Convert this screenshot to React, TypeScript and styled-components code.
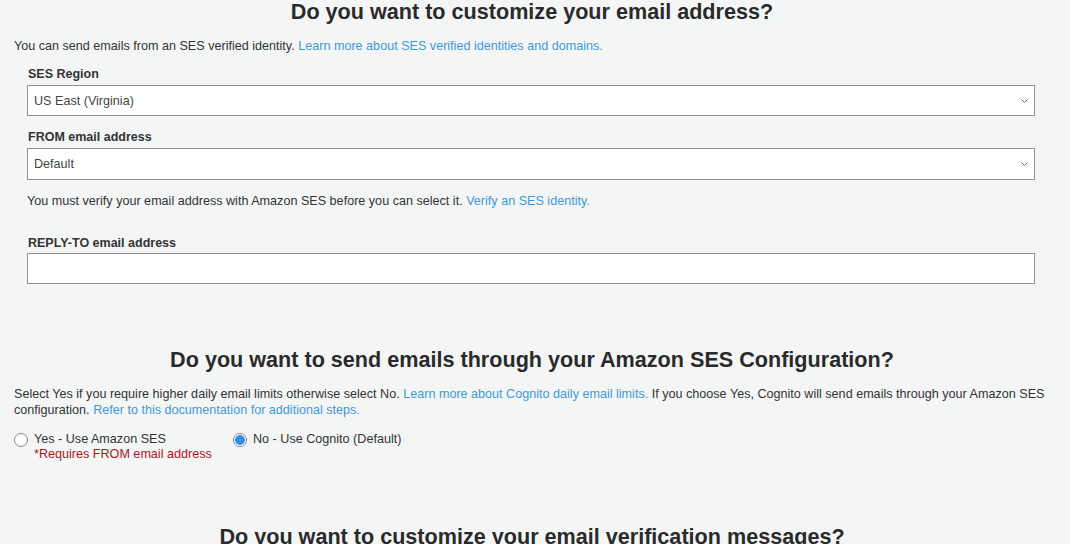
import React from "react";
import styled, { createGlobalStyle } from "styled-components";

const Global = createGlobalStyle`
  html, body { margin: 0; padding: 0; background: #f4f6f6; }
  body { font-family: "Liberation Sans", Arial, sans-serif; color: #333; }
  * { box-sizing: border-box; }
`;

const Page = styled.div`
  width: 1070px;
  height: 544px;
  overflow: hidden;
  padding: 0 20px 0 14px;
`;

const Heading = styled.h2<{ $top: number }>`
  margin: ${(p) => p.$top}px 0 0;
  font-size: 21.6px;
  line-height: 24px;
  font-weight: bold;
  color: #2a2a2a;
  text-align: center;
  white-space: nowrap;
`;

const Para = styled.p<{ $top: number }>`
  margin: ${(p) => p.$top}px 0 0;
  font-size: 12.6px;
  line-height: 16px;
  color: #333;
`;

const Link = styled.a`
  color: #3f98d8;
  text-decoration: none;
`;

const Fields = styled.div`
  padding: 0 15px 0 13px;
`;

const Label = styled.div<{ $top: number }>`
  margin-top: ${(p) => p.$top}px;
  font-size: 12.5px;
  line-height: 16px;
  font-weight: bold;
  color: #333;
  padding-left: 1px;
`;

const Box = styled.div<{ $h?: number; $gap?: number }>`
  margin-top: ${(p) => p.$gap ?? 3}px;
  height: ${(p) => p.$h ?? 31}px;
  border: 1px solid #8d9393;
  background: #fff;
  display: flex;
  align-items: center;
  justify-content: space-between;
  padding: 0 6px 0 6px;
  font-size: 12.6px;
  color: #444;
`;

const RadioRow = styled.div`
  margin-top: 14px;
  display: flex;
  gap: 20px;
`;

const RadioItem = styled.label<{ $w: number }>`
  display: flex;
  gap: 6px;
  width: ${(p) => p.$w}px;
  font-size: 12.6px;
  line-height: 15px;
  color: #333;
`;

const Circle = styled.span<{ $on?: boolean }>`
  flex: none;
  width: 14px;
  height: 14px;
  margin-top: 1px;
  border-radius: 50%;
  border: 1px solid #8a8a8a;
  background: #fff;
  display: flex;
  align-items: center;
  justify-content: center;
  &::after {
    content: "";
    display: ${(p) => (p.$on ? "block" : "none")};
    width: 10px;
    height: 10px;
    border-radius: 50%;
    background: #3a8ee6;
  }
`;

const Req = styled.div`
  color: #b0141c;
`;

const Chevron = () => (
  <svg width="7" height="4" viewBox="0 0 7 4">
    <path d="M0.5 0.5 L3.5 3.5 L6.5 0.5" fill="none" stroke="#6a6a6a" strokeWidth="1" />
  </svg>
);

const Help = styled(Para)``;

export default function App() {
  return (
    <Page>
      <Global />
      <Heading $top={0}>Do you want to customize your email address?</Heading>
      <Para $top={14}>
        You can send emails from an SES verified identity.{" "}
        <Link>Learn more about SES verified identities and domains.</Link>
      </Para>
      <Fields>
        <Label $top={12}>SES Region</Label>
        <Box>
          <span>US East (Virginia)</span>
          <Chevron />
        </Box>
        <Label $top={13}>FROM email address</Label>
        <Box $h={32}>
          <span>Default</span>
          <Chevron />
        </Box>
        <Help $top={13}>
          You must verify your email address with Amazon SES before you can select it.{" "}
          <Link>Verify an SES identity.</Link>
        </Help>
        <Label $top={26}>REPLY-TO email address</Label>
        <Box $h={31} $gap={2} />
      </Fields>
      <Heading $top={64}>Do you want to send emails through your Amazon SES Configuration?</Heading>
      <Para $top={14}>
        Select Yes if you require higher daily email limits otherwise select No.{" "}
        <Link>Learn more about Cognito daily email limits.</Link> If you choose Yes, Cognito will
        send emails through your Amazon SES configuration.{" "}
        <Link>Refer to this documentation for additional steps.</Link>
      </Para>
      <RadioRow>
        <RadioItem $w={199}>
          <Circle />
          <div>
            <div>Yes - Use Amazon SES</div>
            <Req>*Requires FROM email address</Req>
          </div>
        </RadioItem>
        <RadioItem $w={300}>
          <Circle $on />
          <div>No - Use Cognito (Default)</div>
        </RadioItem>
      </RadioRow>
      <Heading $top={63}>Do you want to customize your email verification messages?</Heading>
    </Page>
  );
}
